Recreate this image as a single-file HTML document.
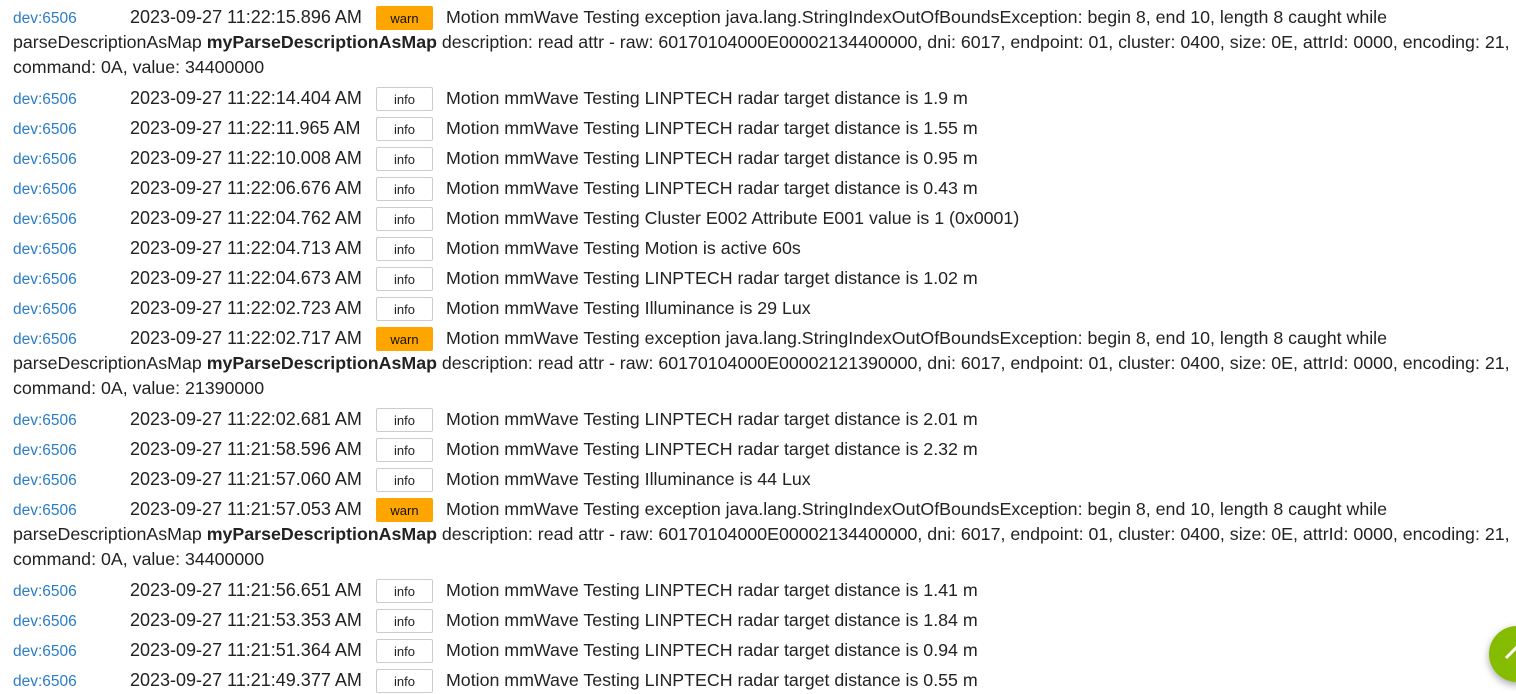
<!DOCTYPE html>
<html><head><meta charset="utf-8"><style>
body{margin:0;background:#fff;width:1516px;height:693px;overflow:hidden;font-family:"Liberation Sans",Arial,sans-serif;color:#222;}
.r{padding:5px 0 0 13px;line-height:25px;height:25px;font-size:17.8px;white-space:nowrap;}
.r.m{height:76px;}
.d{display:inline-block;width:117px;color:#2a7cc7;font-size:15.5px;line-height:20px;}
.t{display:inline-block;width:246px;font-size:18px;line-height:20px;}
.b{display:inline-block;width:57px;height:24px;line-height:24px;text-align:center;font-size:13px;border:1px solid #ccc;border-radius:2px;box-sizing:border-box;vertical-align:top;margin-top:1px;margin-right:13px;}
.w{background:#ffa500;border-color:#ffa500;color:#111;}
b{font-weight:bold;}
.fab{position:absolute;left:1489px;top:626px;width:56px;height:56px;border-radius:50%;background:#86bc00;box-shadow:0 3px 8px rgba(0,0,0,.35);}
</style></head><body>
<div class="r m"><span class="d">dev:6506</span><span class="t">2023-09-27 11:22:15.896 AM</span><span class="b w">warn</span>Motion mmWave Testing exception java.lang.StringIndexOutOfBoundsException: begin 8, end 10, length 8 caught while<br>parseDescriptionAsMap <b>myParseDescriptionAsMap</b> description: read attr - raw: 60170104000E00002134400000, dni: 6017, endpoint: 01, cluster: 0400, size: 0E, attrId: 0000, encoding: 21,<br>command: 0A, value: 34400000</div>
<div class="r"><span class="d">dev:6506</span><span class="t">2023-09-27 11:22:14.404 AM</span><span class="b">info</span>Motion mmWave Testing LINPTECH radar target distance is 1.9 m</div>
<div class="r"><span class="d">dev:6506</span><span class="t">2023-09-27 11:22:11.965 AM</span><span class="b">info</span>Motion mmWave Testing LINPTECH radar target distance is 1.55 m</div>
<div class="r"><span class="d">dev:6506</span><span class="t">2023-09-27 11:22:10.008 AM</span><span class="b">info</span>Motion mmWave Testing LINPTECH radar target distance is 0.95 m</div>
<div class="r"><span class="d">dev:6506</span><span class="t">2023-09-27 11:22:06.676 AM</span><span class="b">info</span>Motion mmWave Testing LINPTECH radar target distance is 0.43 m</div>
<div class="r"><span class="d">dev:6506</span><span class="t">2023-09-27 11:22:04.762 AM</span><span class="b">info</span>Motion mmWave Testing Cluster E002 Attribute E001 value is 1 (0x0001)</div>
<div class="r"><span class="d">dev:6506</span><span class="t">2023-09-27 11:22:04.713 AM</span><span class="b">info</span>Motion mmWave Testing Motion is active 60s</div>
<div class="r"><span class="d">dev:6506</span><span class="t">2023-09-27 11:22:04.673 AM</span><span class="b">info</span>Motion mmWave Testing LINPTECH radar target distance is 1.02 m</div>
<div class="r"><span class="d">dev:6506</span><span class="t">2023-09-27 11:22:02.723 AM</span><span class="b">info</span>Motion mmWave Testing Illuminance is 29 Lux</div>
<div class="r m"><span class="d">dev:6506</span><span class="t">2023-09-27 11:22:02.717 AM</span><span class="b w">warn</span>Motion mmWave Testing exception java.lang.StringIndexOutOfBoundsException: begin 8, end 10, length 8 caught while<br>parseDescriptionAsMap <b>myParseDescriptionAsMap</b> description: read attr - raw: 60170104000E00002121390000, dni: 6017, endpoint: 01, cluster: 0400, size: 0E, attrId: 0000, encoding: 21,<br>command: 0A, value: 21390000</div>
<div class="r"><span class="d">dev:6506</span><span class="t">2023-09-27 11:22:02.681 AM</span><span class="b">info</span>Motion mmWave Testing LINPTECH radar target distance is 2.01 m</div>
<div class="r"><span class="d">dev:6506</span><span class="t">2023-09-27 11:21:58.596 AM</span><span class="b">info</span>Motion mmWave Testing LINPTECH radar target distance is 2.32 m</div>
<div class="r"><span class="d">dev:6506</span><span class="t">2023-09-27 11:21:57.060 AM</span><span class="b">info</span>Motion mmWave Testing Illuminance is 44 Lux</div>
<div class="r m"><span class="d">dev:6506</span><span class="t">2023-09-27 11:21:57.053 AM</span><span class="b w">warn</span>Motion mmWave Testing exception java.lang.StringIndexOutOfBoundsException: begin 8, end 10, length 8 caught while<br>parseDescriptionAsMap <b>myParseDescriptionAsMap</b> description: read attr - raw: 60170104000E00002134400000, dni: 6017, endpoint: 01, cluster: 0400, size: 0E, attrId: 0000, encoding: 21,<br>command: 0A, value: 34400000</div>
<div class="r"><span class="d">dev:6506</span><span class="t">2023-09-27 11:21:56.651 AM</span><span class="b">info</span>Motion mmWave Testing LINPTECH radar target distance is 1.41 m</div>
<div class="r"><span class="d">dev:6506</span><span class="t">2023-09-27 11:21:53.353 AM</span><span class="b">info</span>Motion mmWave Testing LINPTECH radar target distance is 1.84 m</div>
<div class="r"><span class="d">dev:6506</span><span class="t">2023-09-27 11:21:51.364 AM</span><span class="b">info</span>Motion mmWave Testing LINPTECH radar target distance is 0.94 m</div>
<div class="r"><span class="d">dev:6506</span><span class="t">2023-09-27 11:21:49.377 AM</span><span class="b">info</span>Motion mmWave Testing LINPTECH radar target distance is 0.55 m</div>
<div class="fab"><svg width="56" height="56" viewBox="0 0 56 56" style="position:absolute;left:0;top:0"><path d="M17 32 L27 22 L37 32" fill="none" stroke="#fff" stroke-width="3"/></svg></div>
</body></html>
